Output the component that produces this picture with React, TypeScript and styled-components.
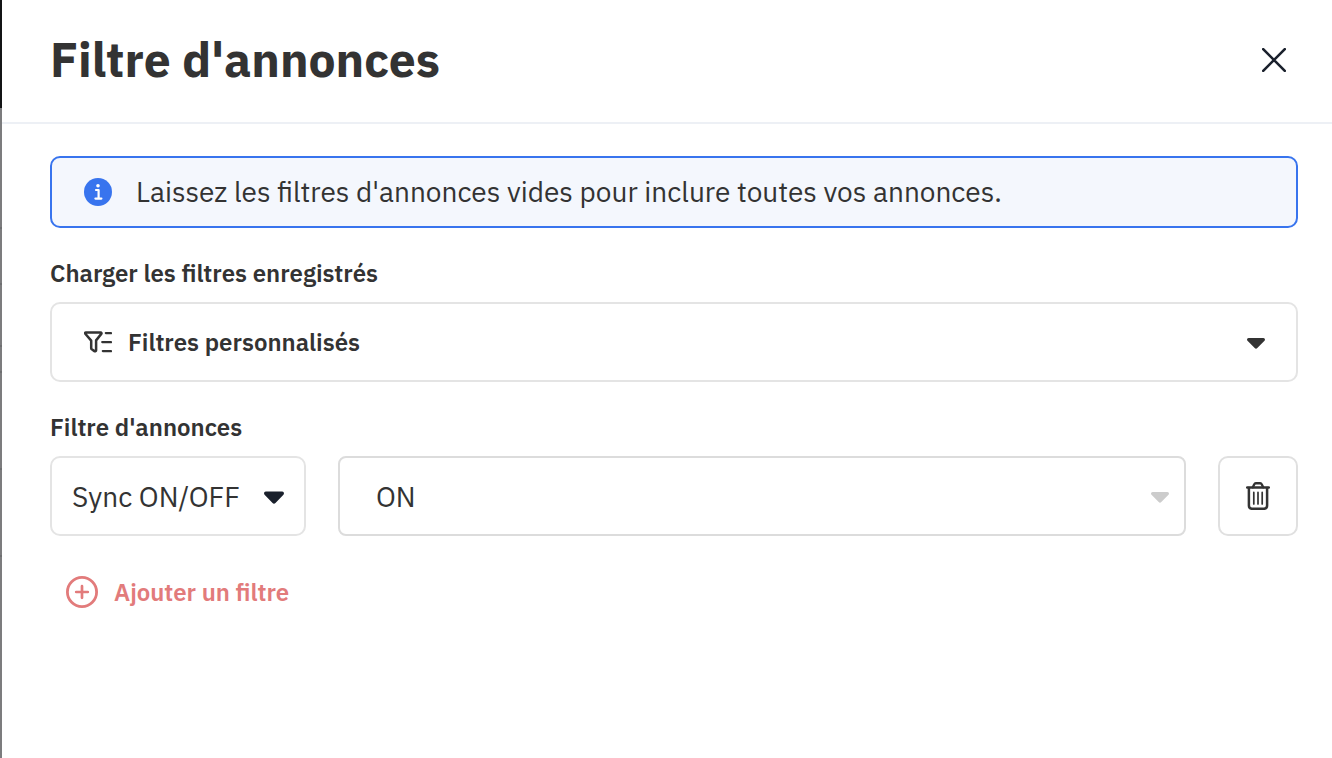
import React from "react";
import styled, { createGlobalStyle } from "styled-components";

const GlobalStyle = createGlobalStyle`
  *, *::before, *::after { box-sizing: border-box; }
  html, body { margin: 0; background: #fff; }
  body, button, select {
    font-family: "IBM Plex Sans", Roboto, "Noto Sans", sans-serif;
    color: #333;
  }
`;

const Page = styled.div`
  display: flex;
  min-height: 100vh;
`;

const Backdrop = styled.div`
  flex: none;
  display: flex;
  flex-direction: column;
  width: 2px;
  background: #7c7c7e;
`;

const BackdropBar = styled.div<{ $height: number; $dark?: boolean }>`
  height: ${({ $height }) => $height}px;
  background: ${({ $dark }) => ($dark ? "#131415" : "transparent")};
  border-bottom: ${({ $dark }) => ($dark ? "none" : "2px solid #6e6f71")};
`;

const Drawer = styled.section`
  flex: 1;
  min-width: 0;
  background: #fff;
`;

const Header = styled.header`
  display: flex;
  align-items: center;
  justify-content: space-between;
  padding: 28px 34px 32px 48px;
  border-bottom: 2px solid #edf0f5;
`;

const Title = styled.h1`
  margin: 0;
  font-size: 48px;
  line-height: 62px;
  font-weight: 700;
`;

const CloseButton = styled.button`
  display: flex;
  align-items: center;
  justify-content: center;
  width: 48px;
  height: 50px;
  padding: 2px 0 0;
  border: 0;
  background: none;
  color: #1a202c;
  cursor: pointer;
`;

const Content = styled.div`
  display: flex;
  flex-direction: column;
  gap: 32px;
  padding: 32px 34px 32px 48px;
`;

const Notice = styled.div`
  display: flex;
  align-items: center;
  gap: 24px;
  padding: 16px 32px;
  border: 2px solid #3874ee;
  border-radius: 10px;
  background: #f4f7fd;
  font-size: 28px;
  line-height: 36px;
`;

const Field = styled.div`
  display: flex;
  flex-direction: column;
  gap: 16px;
`;

const Label = styled.label`
  font-size: 24px;
  line-height: 26px;
  font-weight: 600;
`;

const FilterRow = styled.div`
  display: grid;
  grid-template-columns: 256px minmax(0, 1fr) 80px;
  gap: 32px;
`;

const SelectBox = styled.div`
  position: relative;
  display: flex;
  align-items: center;
`;

const Select = styled.select<{ $left: number; $strong?: boolean; $square?: boolean }>`
  appearance: none;
  width: 100%;
  height: 80px;
  padding: 0 48px 0 ${({ $left }) => $left}px;
  border: 2px solid ${({ $square }) => ($square ? "#dcdcdc" : "#e4e4e4")};
  border-radius: ${({ $square }) => ($square ? 8 : 10)}px;
  background: #fff;
  font-size: ${({ $strong }) => ($strong ? 24 : 28)}px;
  font-weight: ${({ $strong }) => ($strong ? 600 : 400)};
`;

const Adornment = styled.span<{ $side: "left" | "right"; $inset: number; $color: string }>`
  position: absolute;
  ${({ $side, $inset }) => `${$side}: ${$inset}px;`}
  display: flex;
  color: ${({ $color }) => $color};
  pointer-events: none;
`;

const DeleteButton = styled.button`
  display: flex;
  align-items: center;
  justify-content: center;
  height: 80px;
  padding: 0;
  border: 2px solid #e0e0e0;
  border-radius: 10px;
  background: #fff;
  cursor: pointer;
`;

const AddButton = styled.button`
  display: flex;
  align-items: center;
  align-self: flex-start;
  gap: 16px;
  margin: 8px 0 0 16px;
  padding: 0;
  border: 0;
  background: none;
  color: #e27b7b;
  font-size: 24px;
  line-height: 32px;
  font-weight: 600;
  cursor: pointer;
`;

const Caret = ({ width = 18, height = 14 }: { width?: number; height?: number }) => (
  <svg width={width} height={height} viewBox="0 -3 18 14" preserveAspectRatio="none" aria-hidden="true">
    <path
      d="M1.6 0H16.4C17.8 0 18.5 1.8 17.5 2.8L10.3 10.1C9.6 10.9 8.4 10.9 7.7 10.1L.5 2.8C-.5 1.8.2 0 1.6 0Z"
      fill="currentColor"
    />
  </svg>
);

const CloseIcon = () => (
  <svg width="24" height="24" viewBox="0 0 24 24" aria-hidden="true">
    <path d="M1.2 1.2 22.8 22.8M22.8 1.2 1.2 22.8" stroke="currentColor" strokeWidth="2.6" strokeLinecap="round" />
  </svg>
);

const InfoIcon = () => (
  <svg width="28" height="28" viewBox="0 0 28 28" aria-hidden="true">
    <circle cx="14" cy="14" r="14" fill="#3874ee" />
    <circle cx="14" cy="7.8" r="1.8" fill="#fff" />
    <path d="M12 12H14.6V20.4M11.4 20.6H17.4" fill="none" stroke="#fff" strokeWidth="2.2" strokeLinecap="round" strokeLinejoin="round" />
  </svg>
);

const FilterIcon = () => (
  <svg width="28" height="22" viewBox="0 0 28 22" fill="none" stroke="currentColor" strokeWidth="2.5" strokeLinecap="round" strokeLinejoin="round" aria-hidden="true">
    <path d="M1.8 1.4H16.6C17.4 1.4 17.8 2.3 17.3 2.9L12.1 9.4V19.2C12.1 20.2 11.2 20.6 10.4 20.1L7.8 18.3C7.4 18 7.2 17.7 7.2 17.2V9.6L1.3 2.8C.8 2.2 1.1 1.4 1.8 1.4Z" />
    <path d="M21.8 2.1H27M18.2 11.1H27M18.8 20.1H27" strokeWidth="2.2" />
  </svg>
);

const TrashIcon = () => (
  <svg width="24" height="28" viewBox="0 0 24 28" fill="none" stroke="currentColor" strokeLinecap="round" strokeLinejoin="round" aria-hidden="true">
    <path d="M1.2 5.6H22.8" strokeWidth="2.5" />
    <path d="M6.8 5.2 8.3 2.3C8.6 1.6 9.1 1.2 9.8 1.2H14.2C14.9 1.2 15.4 1.6 15.7 2.3L17.2 5.2" strokeWidth="2.4" />
    <path d="M2.9 6V23.6C2.9 25.4 4.2 26.8 6 26.8H18C19.8 26.8 21.1 25.4 21.1 23.6V6" strokeWidth="2.5" />
    <path d="M7.8 10.4V22M12 10.4V22M16.2 10.4V22" strokeWidth="1.7" />
  </svg>
);

const PlusCircleIcon = () => (
  <svg width="32" height="32" viewBox="0 0 32 32" fill="none" stroke="currentColor" strokeLinecap="round" aria-hidden="true">
    <circle cx="16" cy="16" r="14.6" strokeWidth="2.8" />
    <path d="M16 10.2V21.8M10.2 16H21.8" strokeWidth="2.7" />
  </svg>
);

export default function App() {
  return (
    <Page>
      <GlobalStyle />
      <Backdrop aria-hidden="true">
        <BackdropBar $height={108} $dark />
        <BackdropBar $height={121} />
        <BackdropBar $height={56} />
        <BackdropBar $height={62} />
        <BackdropBar $height={26} />
        <BackdropBar $height={97} />
        <BackdropBar $height={87} />
      </Backdrop>
      <Drawer aria-labelledby="drawer-title">
        <Header>
          <Title id="drawer-title">Filtre d'annonces</Title>
          <CloseButton type="button" aria-label="Fermer">
            <CloseIcon />
          </CloseButton>
        </Header>
        <Content>
          <Notice>
            <InfoIcon />
            <span>Laissez les filtres d'annonces vides pour inclure toutes vos annonces.</span>
          </Notice>
          <Field>
            <Label htmlFor="saved-filters">Charger les filtres enregistrés</Label>
            <SelectBox>
              <Select id="saved-filters" $left={76} $strong>
                <option>Filtres personnalisés</option>
              </Select>
              <Adornment $side="left" $inset={34} $color="#333">
                <FilterIcon />
              </Adornment>
              <Adornment $side="right" $inset={33} $color="#333">
                <Caret />
              </Adornment>
            </SelectBox>
          </Field>
          <Field>
            <Label htmlFor="filter-kind">Filtre d'annonces</Label>
            <FilterRow>
              <SelectBox>
                <Select id="filter-kind" $left={20}>
                  <option>Sync ON/OFF</option>
                </Select>
                <Adornment $side="right" $inset={22} $color="#1a202c">
                  <Caret width={20} height={16} />
                </Adornment>
              </SelectBox>
              <SelectBox>
                <Select aria-label="Valeur du filtre" $left={36} $square>
                  <option>ON</option>
                </Select>
                <Adornment $side="right" $inset={17} $color="#ccc">
                  <Caret />
                </Adornment>
              </SelectBox>
              <DeleteButton type="button" aria-label="Supprimer le filtre">
                <TrashIcon />
              </DeleteButton>
            </FilterRow>
          </Field>
          <AddButton type="button">
            <PlusCircleIcon />
            Ajouter un filtre
          </AddButton>
        </Content>
      </Drawer>
    </Page>
  );
}
